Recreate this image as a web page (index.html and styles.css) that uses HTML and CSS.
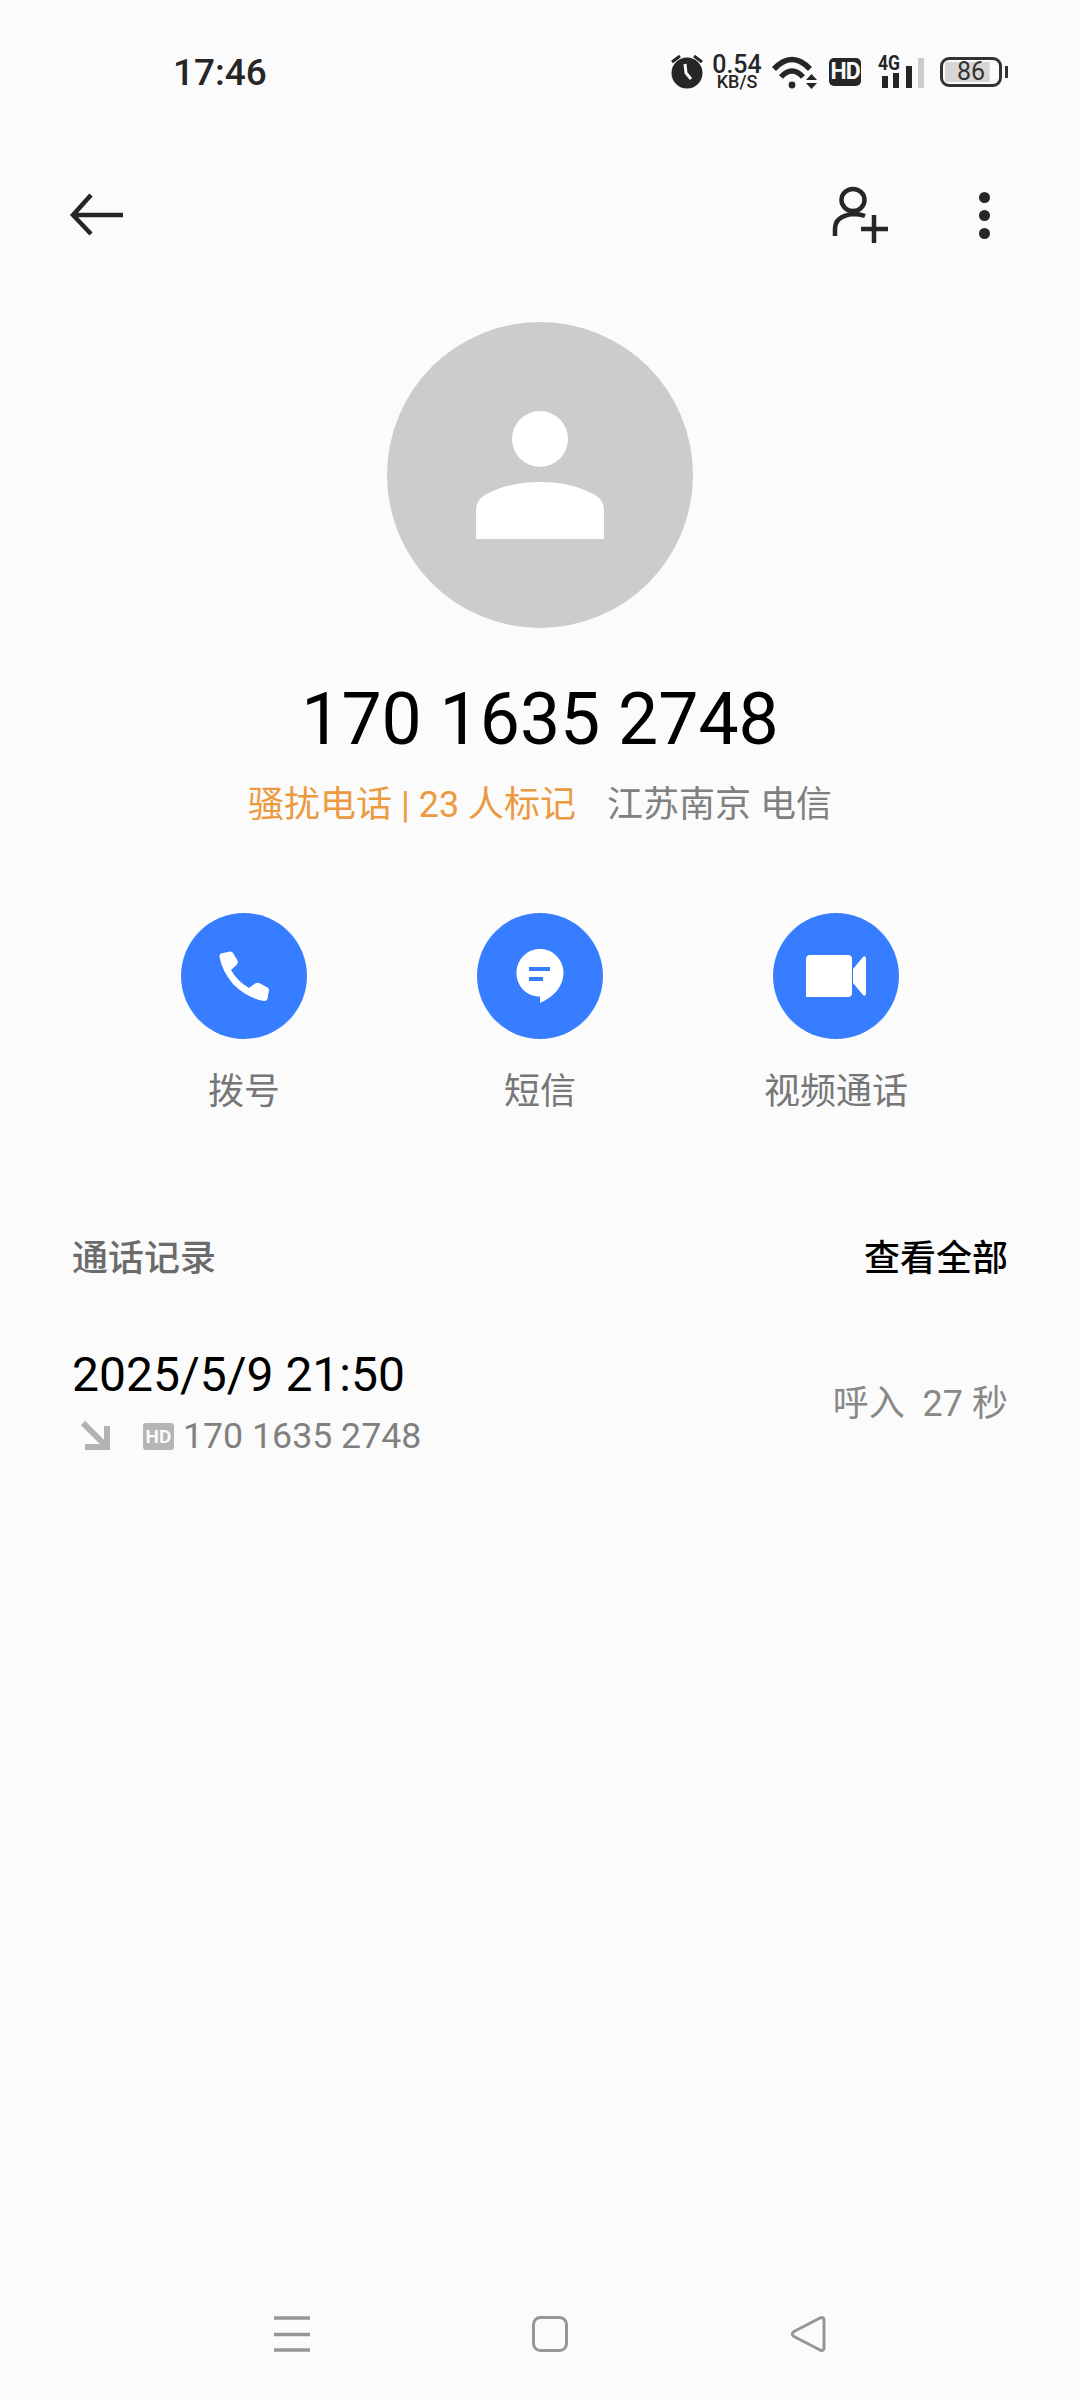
FILE: index.html
```html
<!DOCTYPE html>
<html lang="zh-CN">
<head>
    <meta charset="UTF-8">
    <meta name="viewport" content="width=device-width, initial-scale=1.0">
    <title>通话详情</title>
    <link rel="stylesheet" href="styles.css">
</head>
<body>
    <div class="page">
        <div class="statusbar">
            <span class="time">17:46</span>
            <div class="status-icons">
                <svg class="ic-alarm" width="32" height="34" viewBox="0 0 32 34">
                    <circle cx="16" cy="18" r="15.500" fill="#262626"/>
                    <path d="M1 7 L9 1 M31 7 L23 1" stroke="#262626" stroke-width="3" fill="none"/>
                    <path d="M14 9 L15 18 L20 24" stroke="#fbfbfb" stroke-width="3" fill="none"/>
                </svg>
                <div class="speed">
                    <span class="speed-num">0.54</span>
                    <span class="speed-unit">KB/S</span>
                </div>
                <svg class="ic-wifi" width="45" height="34" viewBox="0 0 45 34">
                    <path d="M2 14 Q20 -5 38 14" stroke="#262626" stroke-width="5.500" fill="none"/>
                    <path d="M9 22 Q20 10 31 22" stroke="#262626" stroke-width="5.500" fill="none"/>
                    <circle cx="20" cy="30" r="3.400" fill="#262626"/>
                    <path d="M34 25 H45 L39.500 19Z M34 28 H45 L39.500 34Z" fill="#262626"/>
                </svg>
                <span class="hd-badge">HD</span>
                <svg class="ic-signal" width="46" height="44" viewBox="0 -5 46 44">
                    <text x="0" y="15" class="net-type" textLength="22" lengthAdjust="spacingAndGlyphs">4G</text>
                    <rect x="4" y="21" width="6" height="12" fill="#262626"/>
                    <rect x="15" y="18" width="6" height="15" fill="#262626"/>
                    <rect x="28" y="11" width="6" height="22" fill="#262626"/>
                    <rect x="40" y="3" width="6" height="30" fill="#cccccc"/>
                </svg>
                <div class="battery">
                    <span class="battery-level">86</span>
                </div>
            </div>
        </div>

        <div class="toolbar">
            <svg width="60" height="44" viewBox="0 0 60 44">
                <path d="M25 2 L7 22 L25 41 M7 22 H57" stroke="#262626" stroke-width="4.500" fill="none"/>
            </svg>
            <div class="toolbar-right">
                <svg width="63" height="58" viewBox="0 0 63 58">
                    <ellipse cx="24" cy="14" rx="11.500" ry="11" stroke="#262626" stroke-width="4.500" fill="none"/>
                    <path d="M6 50 V43 Q6 30 24 28 Q31 28 36 30" stroke="#262626" stroke-width="4.500" fill="none"/>
                    <path d="M32 43 H59 M45 29 V57" stroke="#262626" stroke-width="4.500" fill="none"/>
                </svg>
                <div class="dots">
                    <span></span>
                    <span></span>
                    <span></span>
                </div>
            </div>
        </div>

        <div class="avatar">
            <svg width="128" height="128" viewBox="0 0 128 128">
                <circle cx="64" cy="28" r="28" fill="#fff"/>
                <path d="M0 128 V99 Q0 89 9 84 Q32 71 64 71 Q96 71 119 84 Q128 89 128 99 V128Z" fill="#fff"/>
            </svg>
        </div>

        <h1 class="number">170 1635 2748</h1>
        <p class="tagline"><span class="spam">骚扰电话 | 23 人标记</span><span class="region">江苏南京 电信</span></p>

        <div class="actions">
            <div class="action">
                <div class="action-circle">
                    <svg width="50" height="50" viewBox="0 0 50 50">
                        <path d="M2 2.500 L11 .5 Q13 .3 14 2 L18.500 9.500 Q19.500 12 17.500 14 L12 19 Q18 30 30 37 L36 32.500 Q38.500 31 41 32.500 L48.500 36.500 Q50 37.500 50 39 L48.500 47.500 Q48 50 45 50 Q28 47 14 33 Q3 20 .5 6 Q.3 3.200 2 2.500Z" fill="#fff"/>
                    </svg>
                </div>
                <span>拨号</span>
            </div>
            <div class="action">
                <div class="action-circle">
                    <svg width="48" height="54" viewBox="0 0 48 54">
                        <path d="M24 0 C37 0 47.500 10.500 47.500 24 C47.500 37 38 48 24 54 V47.500 C10.500 47.500 .5 37 .5 24 C.5 10.500 11 0 24 0Z" fill="#fff"/>
                        <rect x="13" y="18" width="21" height="4" fill="#377dff"/>
                        <rect x="13" y="28" width="14" height="4" fill="#377dff"/>
                    </svg>
                </div>
                <span>短信</span>
            </div>
            <div class="action">
                <div class="action-circle">
                    <svg width="60" height="42" viewBox="0 0 60 42">
                        <path d="M4 0 H42 Q46 0 46 4 V38 Q46 42 42 42 H0 V4 Q0 0 4 0Z" fill="#fff"/>
                        <path d="M47 14 L57 2 Q60 0 60 4 V38 Q60 42 57 40 L47 28Z" fill="#fff"/>
                    </svg>
                </div>
                <span>视频通话</span>
            </div>
        </div>

        <div class="section-head">
            <span class="section-title">通话记录</span>
            <span class="section-more">查看全部</span>
        </div>

        <div class="call-row">
            <div class="call-info">
                <div class="call-date">2025/5/9 21:50</div>
                <div class="call-meta">
                    <svg width="30" height="30" viewBox="0 0 30 30">
                        <path d="M2 2 L25 25 M4 26 H26 V5" stroke="#b3b3b3" stroke-width="6" fill="none"/>
                    </svg>
                    <span class="hd-small">HD</span>
                    <span class="call-number">170 1635 2748</span>
                </div>
            </div>
            <span class="call-type">呼入&nbsp; 27 秒</span>
        </div>

        <div class="navbar">
            <svg width="36" height="36" viewBox="0 0 36 36">
                <path d="M0 2 H36 M0 18.500 H36 M0 34 H36" stroke="#969696" stroke-width="3.500" fill="none"/>
            </svg>
            <svg width="36" height="36" viewBox="0 0 36 36">
                <rect x="1.500" y="1.500" width="33" height="33" rx="7" stroke="#969696" stroke-width="3" fill="none"/>
            </svg>
            <svg width="36" height="36" viewBox="0 0 36 36">
                <path d="M4 15.500 L30 2 Q34 0.500 34 4 V32 Q34 35.500 30 34 L4 20.500 Q0.500 18 4 15.500Z" stroke="#969696" stroke-width="3" fill="none"/>
            </svg>
        </div>
    </div>
</body>
</html>
```

FILE: styles.css
```css
* {
    box-sizing: border-box;
}
body {
    margin: 0;
    background-color: #fbfbfb;
    font-family: Roboto, "Noto Sans CJK SC", sans-serif;
}
.page {
    display: flex;
    flex-direction: column;
    height: 2400px;
}
.statusbar {
    display: flex;
    justify-content: space-between;
    align-items: center;
    height: 144px;
    padding: 0 72px 0 173px;
    color: #262626;
}
.time {
    font-size: 37px;
    font-weight: 500;
}
.status-icons {
    display: flex;
    align-items: center;
}
.speed {
    display: flex;
    flex-direction: column;
    align-items: center;
    width: 50px;
    margin: 0 10px 0 9px;
    font-weight: 500;
}
.speed-num {
    font-size: 25px;
    line-height: 19px;
}
.speed-unit {
    font-size: 18px;
    line-height: 15px;
}
.hd-badge {
    width: 32px;
    height: 28px;
    margin: 0 17px 0 12px;
    background: #262626;
    border-radius: 5px;
    color: #fbfbfb;
    font-family: "Liberation Sans Narrow", Roboto, sans-serif;
    font-size: 23px;
    font-weight: 700;
    line-height: 28px;
    letter-spacing: -1px;
    text-align: center;
}
.net-type {
    font-family: Roboto, sans-serif;
    font-size: 21px;
    font-weight: 700;
    fill: #262626;
}
.battery {
    position: relative;
    width: 62px;
    height: 30px;
    margin: 0 6px 0 16px;
    padding: 2px;
    border: 3px solid #333;
    border-radius: 9px;
}
.battery::after {
    content: "";
    position: absolute;
    top: 6px;
    right: -9px;
    width: 3px;
    height: 12px;
    background: #333;
}
.battery-level {
    display: block;
    height: 100%;
    background: linear-gradient(#d6d6d6, #d6d6d6) no-repeat left / 86% 100%;
    color: #333;
    font-size: 25px;
    line-height: 20px;
    text-align: center;
}
.toolbar {
    display: flex;
    justify-content: space-between;
    align-items: center;
    height: 142px;
    padding: 0 86px 0 66px;
}
.toolbar-right {
    display: flex;
    align-items: center;
    gap: 82px;
}
.dots {
    display: flex;
    flex-direction: column;
    align-items: center;
    gap: 7px;
    width: 20px;
}
.dots span {
    width: 11px;
    height: 11px;
    background: #262626;
    border-radius: 50%;
}
.avatar {
    display: flex;
    justify-content: center;
    align-items: center;
    align-self: center;
    width: 306px;
    height: 306px;
    margin-top: 36px;
    background: #cccccc;
    border-radius: 50%;
}
.number {
    margin: 50px 0 0;
    color: #000;
    font-size: 71.500px;
    font-weight: 400;
    line-height: 84px;
    text-align: center;
}
.tagline {
    display: flex;
    justify-content: center;
    gap: 31px;
    margin: 19px 0 0;
    font-size: 36px;
    line-height: 48px;
}
.spam {
    color: #ec9a42;
}
.region {
    color: #808080;
}
.actions {
    display: grid;
    grid-template-columns: repeat(3, 296px);
    margin-top: 84px;
    padding: 0 96px;
}
.action {
    display: flex;
    flex-direction: column;
    align-items: center;
    gap: 29px;
    color: #777;
    font-size: 36px;
    line-height: 48px;
}
.action-circle {
    display: flex;
    justify-content: center;
    align-items: center;
    width: 126px;
    height: 126px;
    background: #377dff;
    border-radius: 50%;
}
.section-head {
    display: flex;
    justify-content: space-between;
    margin-top: 119px;
    padding: 0 72px;
    font-size: 36px;
    font-weight: 500;
    line-height: 48px;
}
.section-title {
    color: #6b6b6b;
}
.section-more {
    color: #000;
}
.call-row {
    display: flex;
    justify-content: space-between;
    align-items: center;
    margin-top: 62px;
    padding: 0 72px;
}
.call-date {
    color: #000;
    font-size: 48px;
    line-height: 60px;
}
.call-meta {
    display: flex;
    align-items: center;
    height: 40px;
    margin-top: 11px;
    padding-left: 9px;
}
.hd-small {
    width: 31px;
    height: 27px;
    margin: 0 9px 0 32px;
    background: #b5b5b5;
    border-radius: 3px;
    color: #fbfbfb;
    font-family: "Liberation Sans Narrow", Roboto, sans-serif;
    font-size: 19px;
    font-weight: 700;
    line-height: 27px;
    text-align: center;
}
.call-number {
    color: #808080;
    font-size: 35.700px;
}
.call-type {
    margin-bottom: 2px;
    color: #888;
    font-size: 36px;
}
.navbar {
    display: flex;
    justify-content: center;
    gap: 222px;
    margin-top: auto;
    padding: 0 0 48px 20px;
}
```
